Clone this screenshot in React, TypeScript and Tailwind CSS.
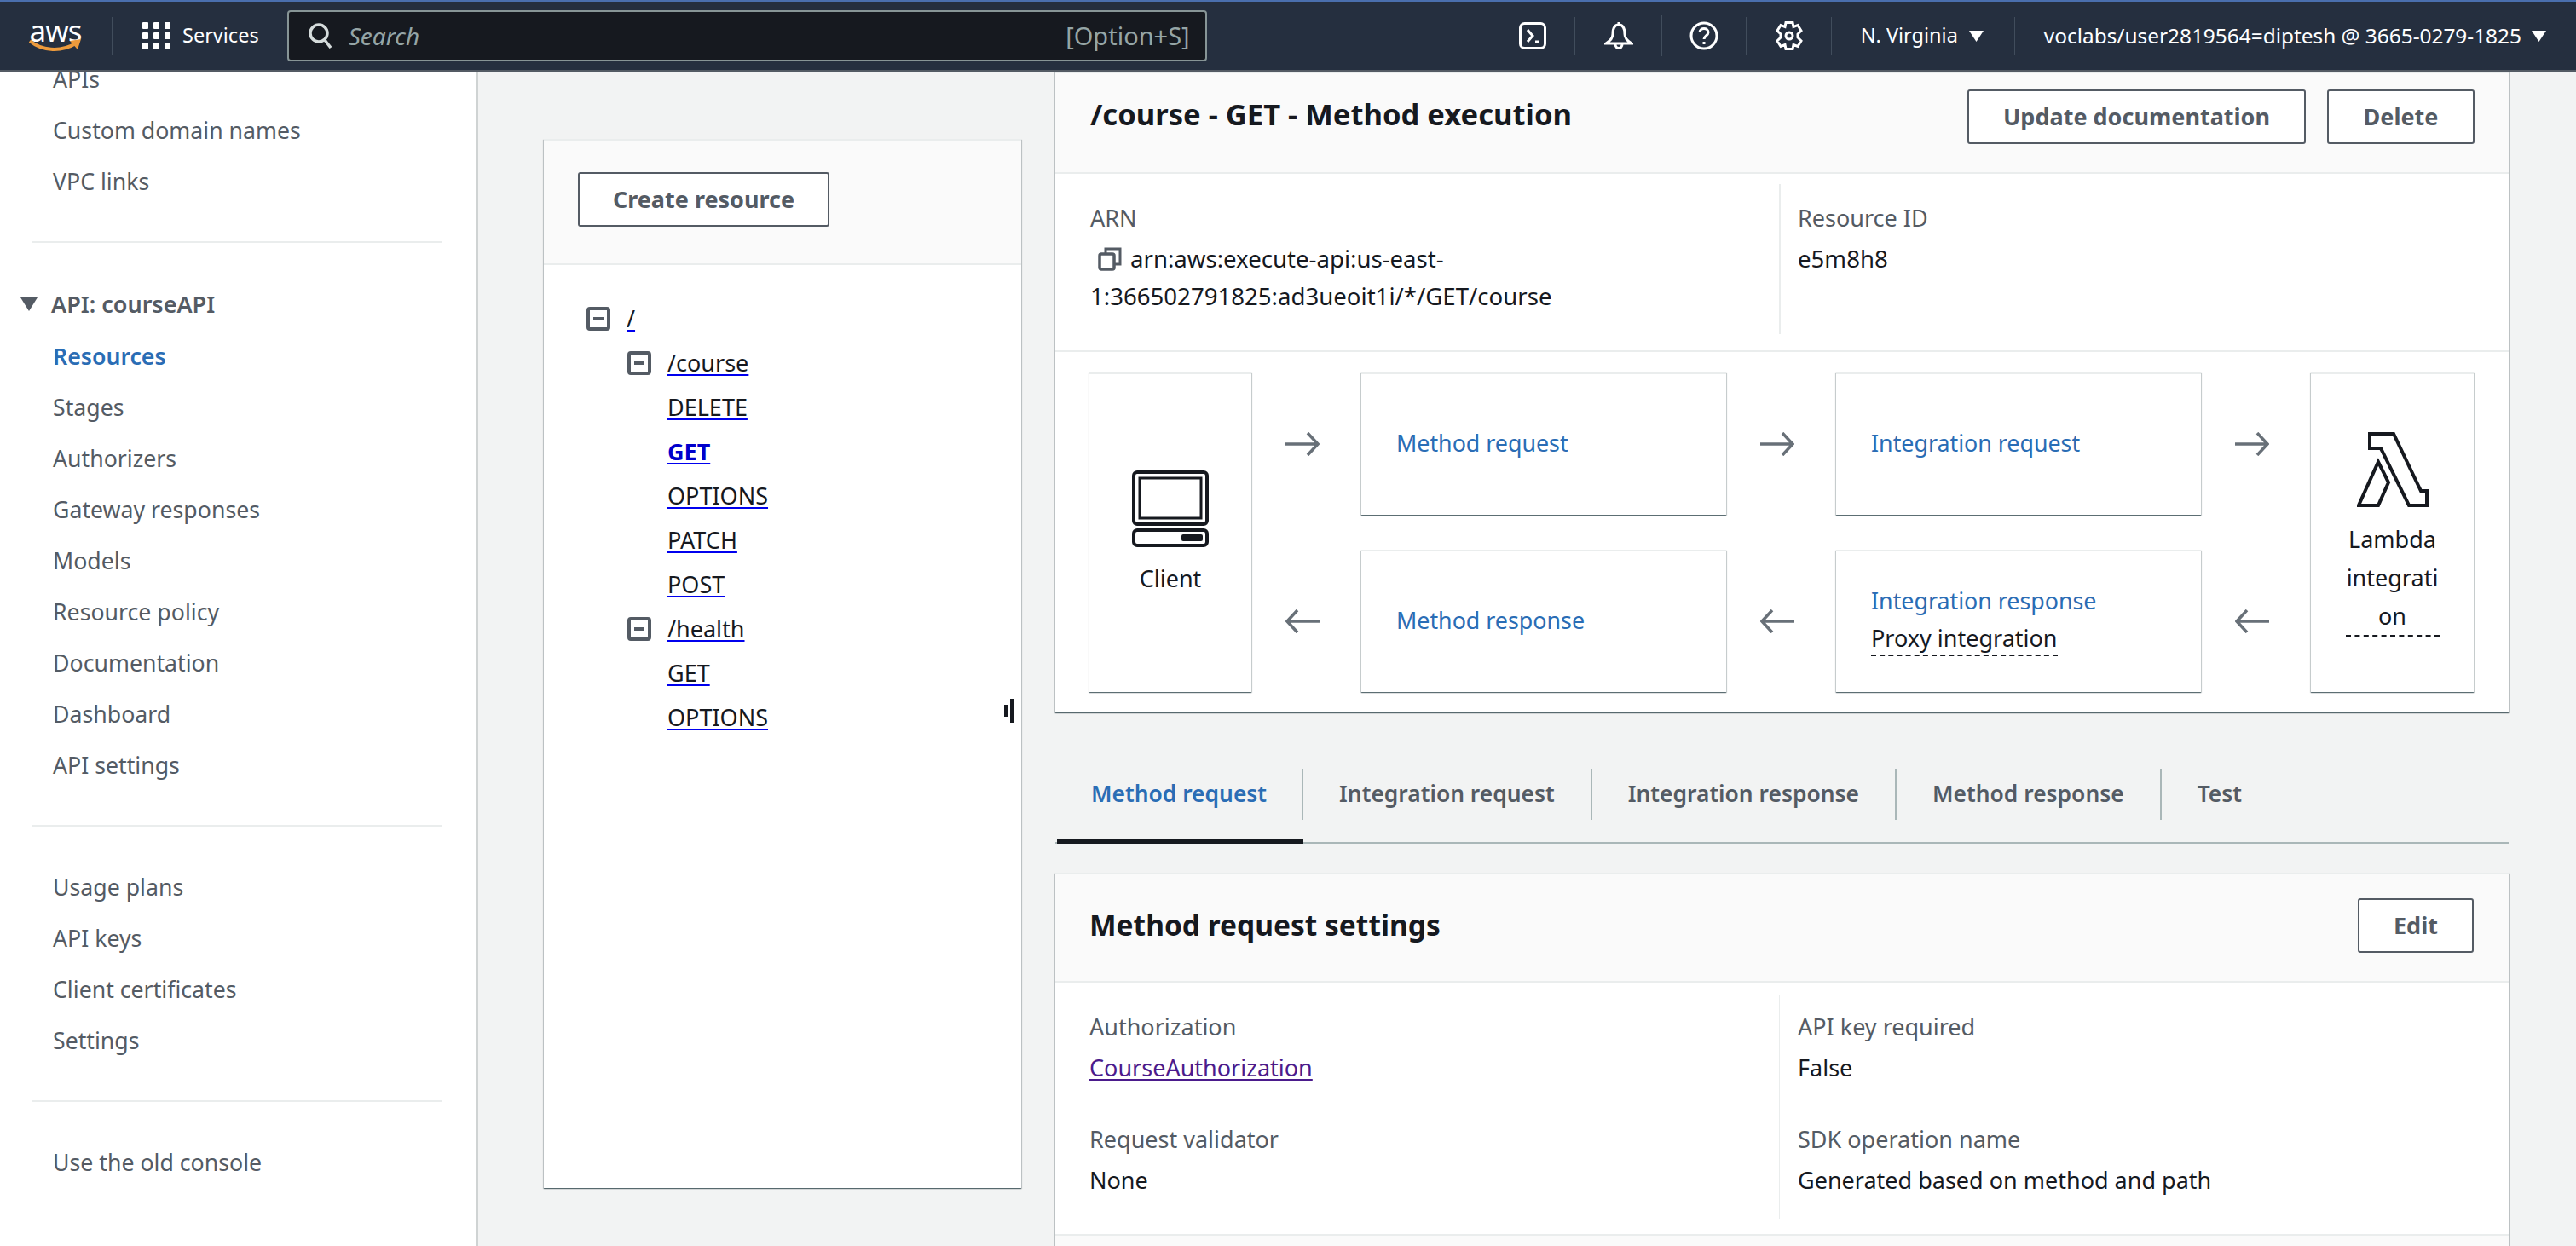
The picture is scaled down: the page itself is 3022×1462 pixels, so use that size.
import React from "react";

const cardShadow =
  "bg-white border-t-2 border-[#eaeded] shadow-[0_1px_1px_0_rgba(0,28,36,0.5),1px_1px_1px_0_rgba(0,28,36,0.15),-1px_1px_1px_0_rgba(0,28,36,0.15)]";

const NavDivider = ({ tall }: { tall?: boolean }) => (
  <div className={`w-px bg-[#414d5c] ${tall ? "h-[48px]" : "h-[44px]"}`} />
);

const Caret = () => (
  <svg width="17" height="14" viewBox="0 0 17 14" className="shrink-0">
    <polygon points="0,1 17,1 8.5,14" fill="#ffffff" />
  </svg>
);

const TopNav = () => (
  <header className="flex h-[84px] shrink-0 items-center border-t-2 border-b-2 border-t-[#4a6fae] border-b-[#545b64] bg-[#252f3f] pl-[34px] text-white">
    <div className="relative h-[40px] w-[62px] shrink-0">
      <span className="block text-center text-[35px] leading-[28px] tracking-[-1px]">aws</span>
      <svg width="62" height="18" viewBox="0 0 62 18" className="absolute top-[23px] left-0">
        <path d="M1 3 C14 14 36 17 55 6" fill="none" stroke="#ec9a3c" strokeWidth="4" />
        <path d="M48 3 L61 1 L57 13 Z" fill="#ec9a3c" />
      </svg>
    </div>
    <div className="ml-[35px] h-[44px] w-px bg-[#414d5c]" />
    <svg width="33" height="32" viewBox="0 0 33 32" className="ml-[35px] shrink-0" fill="#ffffff">
      {[0, 13, 26].map((x) =>
        [0, 12, 24].map((y) => <rect key={`${x}-${y}`} x={x} y={y} width="7" height="8" rx="1" />)
      )}
    </svg>
    <span className="ml-[14px] text-[23.5px] leading-none">Services</span>
    <div className="ml-[33px] flex h-[60px] w-[1079px] shrink-0 items-center rounded-[4px] border-2 border-[#879596] bg-[#16191f] pr-[18px] pl-[22px]">
      <svg width="30" height="30" viewBox="0 0 30 30" fill="none" stroke="#d5dbdb" strokeWidth="3.5">
        <circle cx="13" cy="12" r="10" />
        <path d="M20 20 L27 29" />
      </svg>
      <span className="ml-[18px] text-[28px] text-[#95a5a6] italic">Search</span>
      <span className="ml-auto text-[29px] text-[#95a5a6]">[Option+S]</span>
    </div>
    <svg width="32" height="32" viewBox="0 0 32 32" fill="none" stroke="#ffffff" strokeWidth="3" className="ml-[366px] shrink-0">
      <rect x="1.5" y="1.5" width="29" height="29" rx="5" />
      <path d="M10 9 L16 16 L10 23" />
      <path d="M19 23 H23" />
    </svg>
    <div className="ml-[33px]">
      <NavDivider />
    </div>
    <svg width="34" height="34" viewBox="0 0 34 34" fill="none" stroke="#ffffff" strokeWidth="3" className="ml-[34px] shrink-0">
      <path d="M17 1 V4 M17 4 C11 4 10 9 10 15 C10 20 7 23 2 26 H32 C27 23 24 20 24 15 C24 9 23 4 17 4 Z" />
      <path d="M13 27 C13 33 21 33 21 27" />
    </svg>
    <div className="ml-[33px]">
      <NavDivider tall />
    </div>
    <svg width="34" height="34" viewBox="0 0 34 34" fill="none" stroke="#ffffff" strokeWidth="3" className="ml-[32px] shrink-0">
      <circle cx="17" cy="17" r="15" />
      <path d="M12 13 C12 7 22 7 22 13 C22 17 17 17 17 21" />
      <path d="M17 24 V27" />
    </svg>
    <div className="ml-[32px]">
      <NavDivider />
    </div>
    <svg width="34" height="34" viewBox="0 0 34 34" fill="none" stroke="#ffffff" strokeWidth="3" className="ml-[33px] shrink-0">
      <path d="M13 1.5 H21 L22 6.5 L27 4.5 L31 11 L27 15 V19 L31 23 L27 29.5 L22 27.5 L21 32.5 H13 L12 27.5 L7 29.5 L3 23 L7 19 V15 L3 11 L7 4.5 L12 6.5 Z" />
      <circle cx="17" cy="17" r="4" />
    </svg>
    <div className="ml-[32px]">
      <NavDivider />
    </div>
    <span className="ml-[34px] text-[23.5px] leading-none whitespace-nowrap">N. Virginia</span>
    <span className="ml-[13px]">
      <Caret />
    </span>
    <div className="ml-[36px]">
      <NavDivider />
    </div>
    <span className="ml-[34px] text-[24.4px] leading-none whitespace-nowrap">voclabs/user2819564=diptesh @ 3665-0279-1825</span>
    <span className="ml-[12px]">
      <Caret />
    </span>
  </header>
);

const SideItem = ({ label, active }: { label: string; active?: boolean }) => (
  <div className={`flex h-[60px] items-center pt-[2px] pl-[62px] text-[26.7px] ${active ? "font-semibold text-[#2a6db5]" : "text-[#545b64]"}`}>
    {label}
  </div>
);

const Sidebar = () => (
  <aside className="w-[561px] shrink-0 overflow-hidden border-r-[3px] border-[#cfd3d3] bg-white">
    <div className="-mt-[22px]">
      <SideItem label="APIs" />
      <SideItem label="Custom domain names" />
      <SideItem label="VPC links" />
      <div className="mt-[41px] ml-[38px] h-[2px] w-[480px] bg-[#eaeded]" />
      <div className="mt-[42px] flex h-[60px] items-center pl-[24px] text-[27px] font-semibold text-[#545b64]">
        <svg width="20" height="16" viewBox="0 0 20 16" className="mr-[16px]">
          <polygon points="0,0 20,0 10,16" fill="#545b64" />
        </svg>
        API: courseAPI
      </div>
      <SideItem label="Resources" active />
      {["Stages", "Authorizers", "Gateway responses", "Models", "Resource policy", "Documentation", "Dashboard", "API settings"].map((l) => (
        <SideItem key={l} label={l} />
      ))}
      <div className="mt-[41px] ml-[38px] h-[2px] w-[480px] bg-[#eaeded]" />
      <div className="mt-[40px]">
        {["Usage plans", "API keys", "Client certificates", "Settings"].map((l) => (
          <SideItem key={l} label={l} />
        ))}
      </div>
      <div className="mt-[41px] ml-[38px] h-[2px] w-[480px] bg-[#eaeded]" />
      <div className="mt-[40px]">
        <SideItem label="Use the old console" />
      </div>
    </div>
  </aside>
);

const MinusBox = () => (
  <svg width="28" height="28" viewBox="0 0 28 28" fill="none" stroke="#545b64" strokeWidth="4" className="shrink-0">
    <rect x="2" y="2" width="24" height="24" rx="2" />
    <path d="M8 14 H20" />
  </svg>
);

const TreeLink = ({ label, active }: { label: string; active?: boolean }) => (
  <span
    className={`text-[27px] underline decoration-[#0000ee] decoration-2 underline-offset-[3px] ${
      active ? "font-bold text-[#0000cc]" : "text-[#16191f]"
    }`}
  >
    {label}
  </span>
);

const TreeRow = ({ label, depth, box, active }: { label: string; depth: 0 | 1 | 2; box?: boolean; active?: boolean }) => (
  <div className={`flex h-[52px] items-center ${depth === 0 ? "pl-[50px]" : depth === 1 ? "pl-[98px]" : "pl-[145px]"}`}>
    {box && (
      <span className="mr-[19px]">
        <MinusBox />
      </span>
    )}
    <TreeLink label={label} active={active} />
  </div>
);

const ResourcePanel = () => (
  <section className={`relative mt-[79px] h-[1231px] w-[560px] shrink-0 ${cardShadow}`}>
    <div className="flex h-[146px] items-start border-b-2 border-[#eaeded] bg-[#fafafa] pt-[37px] pl-[40px]">
      <OutlineButton label="Create resource" className="w-[295px]" />
    </div>
    <div className="pt-[37px]">
      <TreeRow label="/" depth={0} box />
      <TreeRow label="/course" depth={1} box />
      <TreeRow label="DELETE" depth={2} />
      <TreeRow label="GET" depth={2} active />
      <TreeRow label="OPTIONS" depth={2} />
      <TreeRow label="PATCH" depth={2} />
      <TreeRow label="POST" depth={2} />
      <TreeRow label="/health" depth={1} box />
      <TreeRow label="GET" depth={2} />
      <TreeRow label="OPTIONS" depth={2} />
    </div>
    {/* resize handle */}
    <div className="absolute top-[655px] left-[540px] flex items-center gap-[3px]">
      <div className="h-[14px] w-[4px] bg-[#16191f]" />
      <div className="h-[28px] w-[4px] bg-[#16191f]" />
    </div>
  </section>
);

const OutlineButton = ({ label, className }: { label: string; className?: string }) => (
  <button className={`flex h-[64px] items-center justify-center rounded-[3px] border-2 border-[#545b64] bg-white text-[27px] font-bold text-[#545b64] ${className ?? ""}`}>
    {label}
  </button>
);

const ArrowRight = () => (
  <svg width="40" height="28" viewBox="0 0 40 28" fill="none" stroke="#687078" strokeWidth="3.5" className="ml-[40px]">
    <path d="M0 14 H38 M26 1 L38 14 L26 27" />
  </svg>
);

const ArrowLeft = () => (
  <svg width="40" height="28" viewBox="0 0 40 28" fill="none" stroke="#687078" strokeWidth="3.5" className="ml-[40px]">
    <path d="M40 14 H2 M14 1 L2 14 L14 27" />
  </svg>
);

const FlowCard = ({ children }: { children: React.ReactNode }) => (
  <div className={`flex h-[167px] flex-col pl-[41px] ${cardShadow}`}>{children}</div>
);

const Blue = ({ label }: { label: string }) => <span className="text-[26.8px] leading-[44px] text-[#2a6db5]">{label}</span>;

const Diagram = () => (
  <div className="grid grid-cols-[190px_129px_428px_129px_428px_129px_191px] grid-rows-[167px_167px] gap-y-[41px] pt-[24px] pb-[24px] pl-[40px]">
    <div className={`row-span-2 flex flex-col items-center pt-[113px] ${cardShadow}`}>
      <svg width="90" height="90" viewBox="0 0 90 90" fill="none" stroke="#16191f" className="shrink-0">
        <rect x="2" y="2" width="86" height="61" rx="4" strokeWidth="4" />
        <rect x="9" y="9" width="72" height="47" strokeWidth="3" />
        <rect x="2" y="70" width="86" height="18" rx="4" strokeWidth="4" />
        <rect x="58" y="75" width="25" height="8" rx="2" fill="#16191f" stroke="none" />
      </svg>
      <span className="mt-[17px] text-[27px] leading-[40px] text-[#16191f]">Client</span>
    </div>
    <div className="flex items-center">
      <ArrowRight />
    </div>
    <FlowCard>
      <div className="flex h-full items-center pb-[4px]">
        <Blue label="Method request" />
      </div>
    </FlowCard>
    <div className="flex items-center">
      <ArrowRight />
    </div>
    <FlowCard>
      <div className="flex h-full items-center pb-[4px]">
        <Blue label="Integration request" />
      </div>
    </FlowCard>
    <div className="flex items-center">
      <ArrowRight />
    </div>
    <div className={`row-span-2 flex flex-col items-center pt-[68px] ${cardShadow}`}>
      <svg width="84" height="88" viewBox="0 0 84 88" fill="none" stroke="#16191f" strokeWidth="4" className="shrink-0">
        <path d="M15 2 H43 L75 69 H82 V86 H61 L28 19 H15 Z" />
        <path d="M25 35 L37 59 L25 86 H2 Z" />
      </svg>
      <div className="mt-[15px] w-[110px] border-b-2 border-dashed border-[#16191f] text-center text-[27px] leading-[45px] wrap-break-word text-[#16191f]">
        Lambda integration
      </div>
    </div>
    <div className="flex items-center">
      <ArrowLeft />
    </div>
    <FlowCard>
      <div className="flex h-full items-center pb-[4px]">
        <Blue label="Method response" />
      </div>
    </FlowCard>
    <div className="flex items-center">
      <ArrowLeft />
    </div>
    <FlowCard>
      <div className="pt-[36px]">
        <Blue label="Integration response" />
        <div className="leading-[44px]">
          <span className="border-b-2 border-dashed border-[#16191f] pb-[1px] text-[27px] text-[#16191f]">Proxy integration</span>
        </div>
      </div>
    </FlowCard>
    <div className="flex items-center">
      <ArrowLeft />
    </div>
  </div>
);

const TABS = ["Method request", "Integration request", "Integration response", "Method response", "Test"];

const Tabs = () => (
  <div className="mt-[66px] flex border-b-2 border-[#aab7b8] pl-[2px]">
    {TABS.map((t, i) => (
      <div key={t} className={`-mb-[2px] border-b-[6px] pb-[22px] ${i === 0 ? "border-[#16191f]" : "border-transparent"}`}>
        <div
          className={`flex h-[60px] items-center text-[26.4px] font-semibold ${i === 0 ? "pr-[41px] pl-[40px] text-[#2a6db5]" : "px-[42px] text-[#545b64]"} ${
            i < TABS.length - 1 ? "border-r-2 border-[#aab7b8]" : ""
          }`}
        >
          {t}
        </div>
      </div>
    ))}
  </div>
);

const Field = ({ label, children }: { label: string; children: React.ReactNode }) => (
  <div className="h-[132px]">
    <div className="text-[27px] leading-[48px] text-[#545b64]">{label}</div>
    <div className="text-[27px] leading-[48px] text-[#16191f]">{children}</div>
  </div>
);

const MainPanel = () => (
  <div className="min-w-0 flex-1">
    <section className={`${cardShadow} border-t-0`}>
      <div className="flex h-[118px] items-start justify-between border-b-2 border-[#eaeded] bg-[#fafafa] pt-[19px] pr-[40px] pl-[41px]">
        <h1 className="-mt-[1px] text-[34.6px] leading-[60px] font-bold text-[#16191f]">/course - GET - Method execution</h1>
        <div className="flex gap-[25px]">
          <OutlineButton label="Update documentation" className="w-[397px]" />
          <OutlineButton label="Delete" className="w-[173px]" />
        </div>
      </div>
      <div className="grid h-[209px] grid-cols-[851px_1fr] border-b-2 border-[#eaeded] pt-[12px]">
        <div className="h-[176px] border-r-2 border-[#eaeded] pt-[15px] pl-[41px]">
          <div className="text-[27px] leading-[50px] text-[#545b64]">ARN</div>
          <div className="text-[27.6px] leading-[44px] text-[#16191f]">
            <svg width="28" height="28" viewBox="0 0 28 28" fill="none" stroke="#545b64" strokeWidth="3.5" className="mr-[10px] ml-[9px] inline-block align-[-4px]">
              <rect x="2" y="8" width="17" height="18" rx="2" />
              <path d="M9 7 V2 H26 V20 H20" strokeWidth="3" />
            </svg>
            arn:aws:execute-api:us-east-
            <br />
            1:366502791825:ad3ueoit1i/*/GET/course
          </div>
        </div>
        <div className="pt-[15px] pl-[20px]">
          <div className="text-[27px] leading-[50px] text-[#545b64]">Resource ID</div>
          <div className="text-[27.6px] leading-[44px] text-[#16191f]">e5m8h8</div>
        </div>
      </div>
      <Diagram />
    </section>
    <Tabs />
    <section className={`mt-[34px] ${cardShadow}`}>
      <div className="flex h-[127px] items-start justify-between border-b-2 border-[#eaeded] bg-[#fafafa] pt-[28px] pr-[41px] pl-[40px]">
        <h2 className="text-[33.5px] leading-[62px] font-bold text-[#16191f]">Method request settings</h2>
        <OutlineButton label="Edit" className="w-[136px]" />
      </div>
      <div className="grid h-[297px] grid-cols-[850px_1fr] border-b-2 border-[#eaeded] pt-[14px]">
        <div className="h-[263px] border-r border-[#eaeded] pt-[14px] pl-[40px]">
          <Field label="Authorization">
            <span className="text-[#4b1b8c] underline decoration-2 underline-offset-[3px]">CourseAuthorization</span>
          </Field>
          <Field label="Request validator">None</Field>
        </div>
        <div className="pt-[14px] pl-[21px]">
          <Field label="API key required">False</Field>
          <Field label="SDK operation name">Generated based on method and path</Field>
        </div>
      </div>
      <div className="h-[40px] bg-[#fafafa]" />
    </section>
  </div>
);

export default function App() {
  return (
    <div className="flex h-screen flex-col overflow-hidden bg-[#f2f3f3] font-['Noto_Sans',sans-serif]">
      <TopNav />
      <div className="flex min-h-0 flex-1">
        <Sidebar />
        <main className="flex min-w-0 flex-1 gap-[40px] pr-[79px] pl-[77px]">
          <ResourcePanel />
          <MainPanel />
        </main>
      </div>
    </div>
  );
}
